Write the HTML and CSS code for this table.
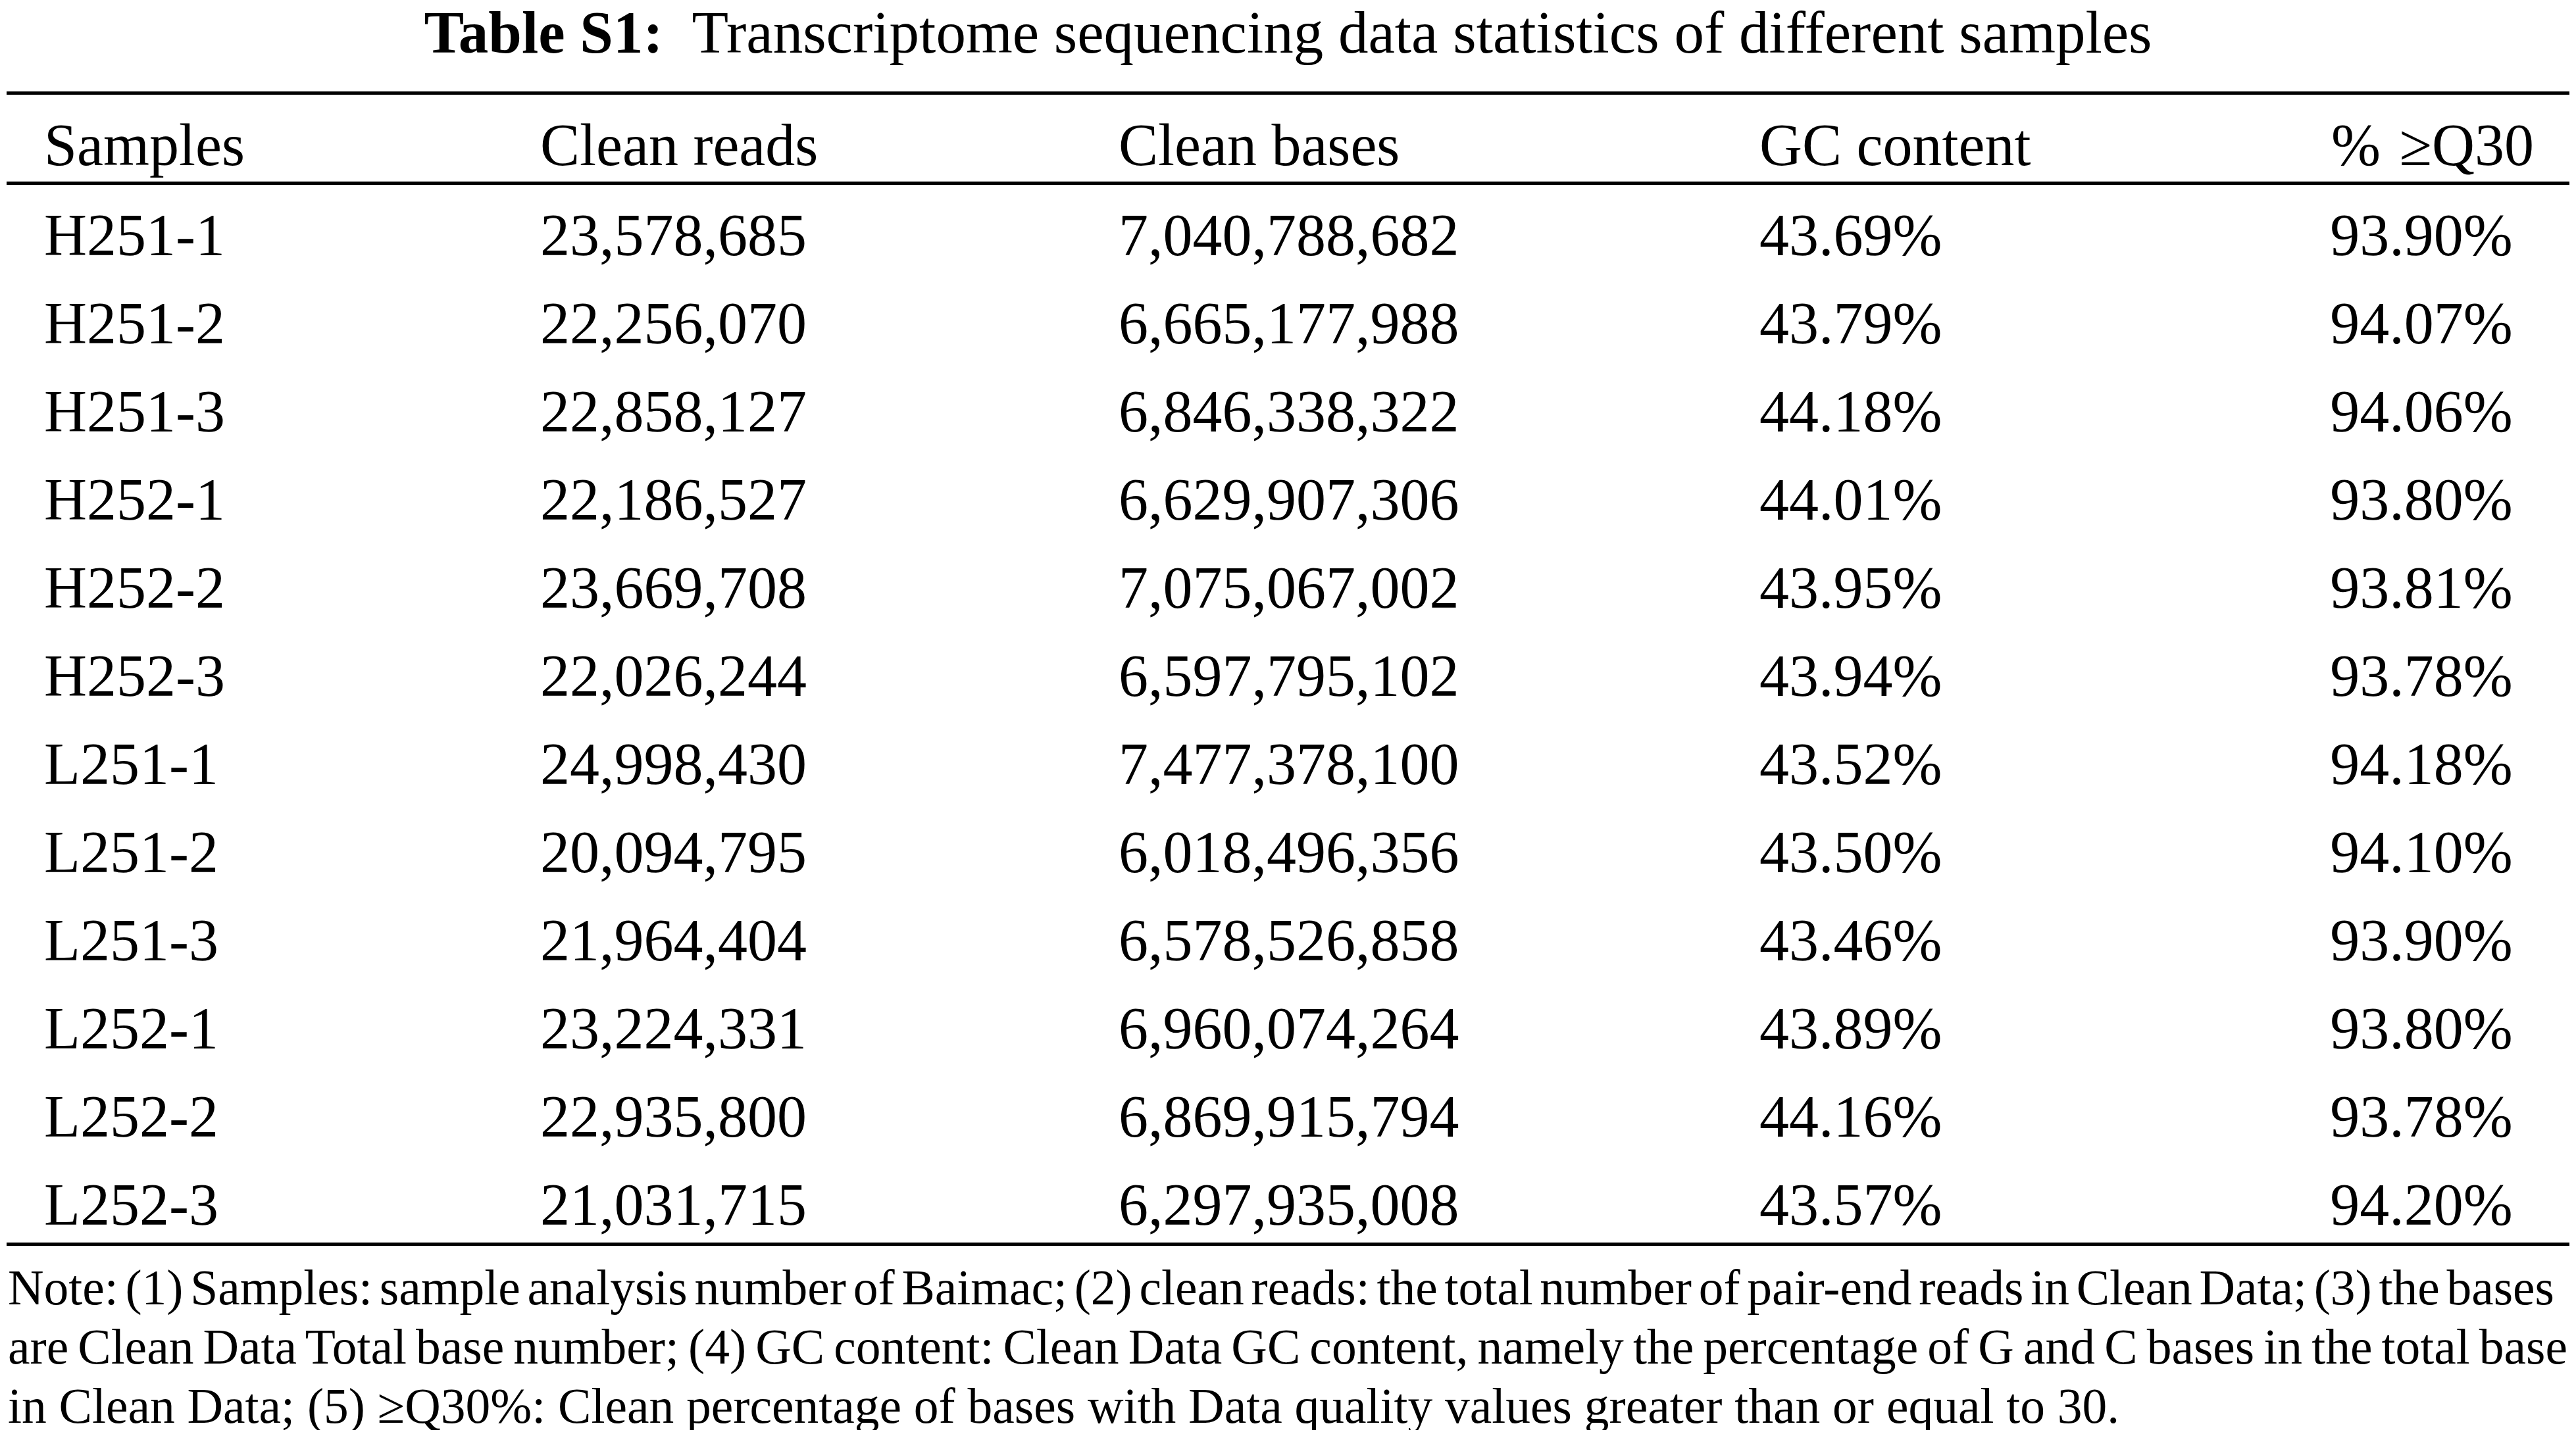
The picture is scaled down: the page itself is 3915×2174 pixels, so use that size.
FILE: index.html
```html
<!DOCTYPE html>
<html>
<head>
<meta charset="utf-8">
<link rel="stylesheet" href="styles.css">
</head>
<body>
<div class="title"><b>Table S1:</b>&nbsp; Transcriptome sequencing data statistics of different samples</div>
<div class="table">
  <div class="row head"><div>Samples</div><div>Clean reads</div><div>Clean bases</div><div>GC content</div><div class="c q">% ≥Q30</div></div>
  <div class="body">
    <div class="row"><div>H251-1</div><div>23,578,685</div><div>7,040,788,682</div><div>43.69%</div><div class="c">93.90%</div></div>
    <div class="row"><div>H251-2</div><div>22,256,070</div><div>6,665,177,988</div><div>43.79%</div><div class="c">94.07%</div></div>
    <div class="row"><div>H251-3</div><div>22,858,127</div><div>6,846,338,322</div><div>44.18%</div><div class="c">94.06%</div></div>
    <div class="row"><div>H252-1</div><div>22,186,527</div><div>6,629,907,306</div><div>44.01%</div><div class="c">93.80%</div></div>
    <div class="row"><div>H252-2</div><div>23,669,708</div><div>7,075,067,002</div><div>43.95%</div><div class="c">93.81%</div></div>
    <div class="row"><div>H252-3</div><div>22,026,244</div><div>6,597,795,102</div><div>43.94%</div><div class="c">93.78%</div></div>
    <div class="row"><div>L251-1</div><div>24,998,430</div><div>7,477,378,100</div><div>43.52%</div><div class="c">94.18%</div></div>
    <div class="row"><div>L251-2</div><div>20,094,795</div><div>6,018,496,356</div><div>43.50%</div><div class="c">94.10%</div></div>
    <div class="row"><div>L251-3</div><div>21,964,404</div><div>6,578,526,858</div><div>43.46%</div><div class="c">93.90%</div></div>
    <div class="row"><div>L252-1</div><div>23,224,331</div><div>6,960,074,264</div><div>43.89%</div><div class="c">93.80%</div></div>
    <div class="row"><div>L252-2</div><div>22,935,800</div><div>6,869,915,794</div><div>44.16%</div><div class="c">93.78%</div></div>
    <div class="row"><div>L252-3</div><div>21,031,715</div><div>6,297,935,008</div><div>43.57%</div><div class="c">94.20%</div></div>
  </div>
</div>
<div class="note">
  <span class="line l1">Note: (1) Samples: sample analysis number of Baimac; (2) clean reads: the total number of pair-end reads in Clean Data; (3) the bases</span>
  <span class="line l2">are Clean Data Total base number; (4) GC content: Clean Data GC content, namely the percentage of G and C bases in the total base</span>
  <span class="line last">in Clean Data; (5) ≥Q30%: Clean percentage of bases with Data quality values greater than or equal to 30.</span>
</div>
</body>
</html>
```
FILE: styles.css
```css
html, body {
  margin: 0;
  padding: 0;
  background: #fff;
}
body {
  width: 3915px;
  height: 2174px;
  overflow: hidden;
  font-family: "Liberation Serif", "Times New Roman", serif;
  color: #000;
}
.title {
  text-align: center;
  font-size: 91px;
  line-height: 100px;
  white-space: nowrap;
  margin-bottom: 39px;
}
.table {
  margin: 0 10px;
  border-top: 5px solid #000;
  border-bottom: 5px solid #000;
}
.row {
  display: grid;
  grid-template-columns: 754px 879px 974px 838px 450px;
  font-size: 90px;
  line-height: 114px;
  padding-top: 20px;
  white-space: nowrap;
}
.row > div {
  padding-left: 57px;
}
.row > div.c {
  padding-left: 0;
  text-align: center;
}
.row > div.q {
  padding-left: 34px;
  word-spacing: 6px;
}
.row.head {
  line-height: 111px;
  padding-top: 21px;
  border-bottom: 5px solid #000;
}
.note {
  margin: 19px 13px 0 12px;
  font-size: 75.5px;
  line-height: 90px;
}
.note .line {
  display: block;
  white-space: nowrap;
  text-align: justify;
  text-align-last: justify;
}
.note .l1 {
  word-spacing: -9px;
  margin-right: 20px;
}
.note .l2 {
  word-spacing: -9px;
}
.note .line.last {
  text-align: left;
  text-align-last: left;
}
```
